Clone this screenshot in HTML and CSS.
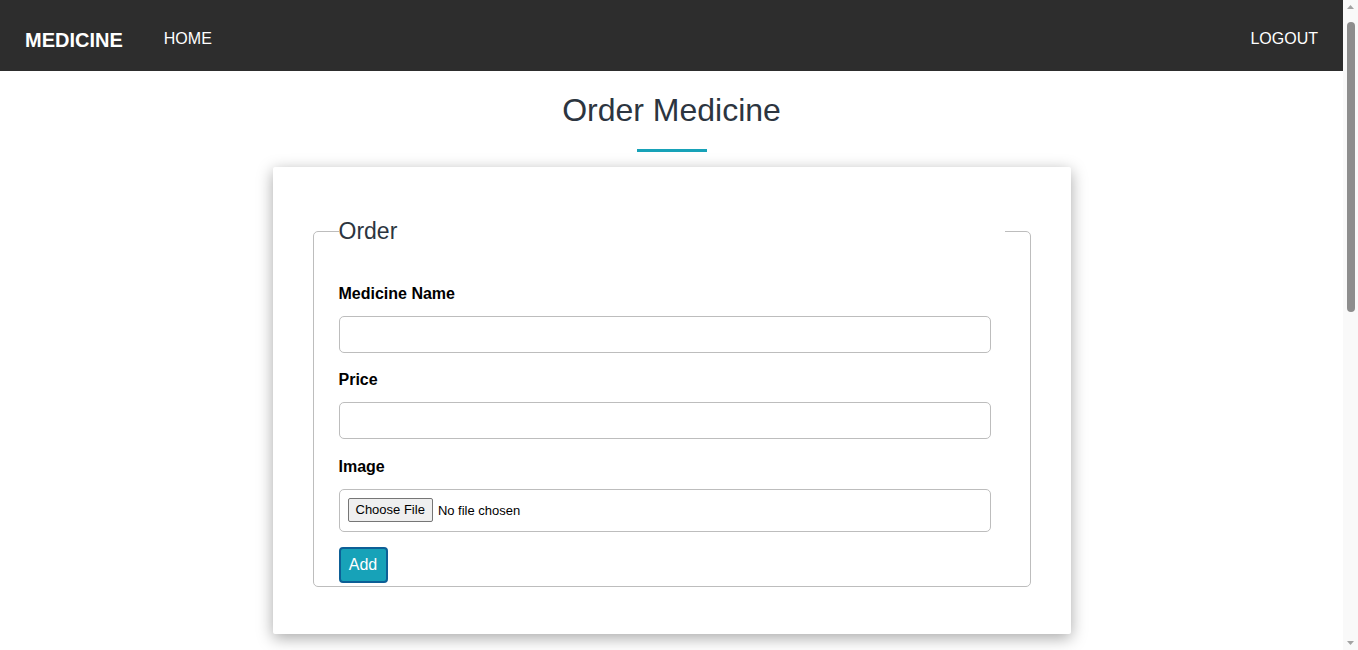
FILE: index.html
```html
<!DOCTYPE html>
<html lang="en">
<head>
<meta charset="utf-8">
<title>Order Medicine</title>
<link rel="stylesheet" href="styles.css">
</head>
<body>
<div class="page">
  <header class="navbar">
    <a class="brand" href="#">MEDICINE</a>
    <nav class="nav-left"><a class="nav-link" href="#">HOME</a></nav>
    <nav class="nav-right"><a class="nav-link" href="#">LOGOUT</a></nav>
  </header>
  <main class="main">
    <h1 class="page-title">Order Medicine</h1>
    <div class="title-bar"></div>
    <section class="card">
      <form>
        <fieldset class="fieldset">
          <legend class="legend">Order</legend>
          <div class="fields">
            <div class="form-group">
              <label class="label" for="name">Medicine Name</label>
              <input class="form-control" id="name" type="text">
            </div>
            <div class="form-group">
              <label class="label" for="price">Price</label>
              <input class="form-control" id="price" type="text">
            </div>
            <div class="form-group">
              <label class="label" for="image">Image</label>
              <div class="file-box"><input class="file-input" id="image" type="file"></div>
            </div>
            <button class="btn-add" type="button">Add</button>
          </div>
        </fieldset>
      </form>
    </section>
  </main>
</div>
<div class="scrollbar" aria-hidden="true">
  <svg class="sb-arrow sb-up" width="15" height="14" viewBox="0 0 15 14"><path d="M4 9 L7.5 5 L11 9 Z" fill="#a3a3a3"/></svg>
  <div class="sb-track"><div class="sb-thumb"></div></div>
  <svg class="sb-arrow sb-down" width="15" height="14" viewBox="0 0 15 14"><path d="M4 5 L7.5 9 L11 5 Z" fill="#a3a3a3"/></svg>
</div>
</body>
</html>
```
FILE: styles.css
```css
* { box-sizing: border-box; }
html, body { margin: 0; padding: 0; }
body {
  font-family: "Liberation Sans", Arial, sans-serif;
  background: #fff;
  color: #000;
}
.page {
  width: calc(100% - 15px);
  min-height: 1394px;
}
.navbar {
  height: 71px;
  background: #2d2d2d;
  display: flex;
  align-items: flex-start;
  padding: 25px 25px 0 25px;
}
.brand {
  color: #fff;
  font-weight: bold;
  font-size: 20px;
  line-height: 30px;
  text-decoration: none;
}
.nav-left { margin-left: 41px; margin-top: 2px; }
.nav-right { margin-left: auto; margin-top: 2px; }
.nav-link {
  color: #fff;
  font-size: 16px;
  line-height: 24px;
  text-decoration: none;
}
.main {
  display: flex;
  flex-direction: column;
  align-items: center;
}
.page-title {
  margin: 20px 0 0;
  font-size: 32px;
  font-weight: normal;
  line-height: 38px;
  color: #2c3540;
}
.title-bar {
  width: 70px;
  height: 3px;
  background: #17a2b8;
  margin-top: 20px;
}
.card {
  width: 798px;
  margin-top: 15px;
  background: #fff;
  padding: 51px 40px 47.5px;
  box-shadow: 0 4px 16px rgba(0, 0, 0, 0.35);
  border-radius: 2px;
}
.fieldset {
  margin: 0;
  border: 1px solid #bdbdbd;
  border-radius: 5px;
  padding: 0 25px 2.5px;
  min-width: 0;
}
.legend {
  width: 100%;
  padding: 0;
  font-size: 23px;
  line-height: 27.6px;
  color: #2c3540;
  margin-bottom: 36px;
}
.fields { padding-right: 14px; }
.form-group { margin-bottom: 15.5px; }
.label {
  display: block;
  font-weight: bold;
  font-size: 16px;
  line-height: 24px;
  margin-bottom: 10px;
}
.form-control {
  display: block;
  width: 100%;
  height: 37px;
  border: 1px solid #bdbdbd;
  border-radius: 5px;
  padding: 6px 12px;
  font: 16px "Liberation Sans", Arial, sans-serif;
  background: #fff;
}
.file-box {
  height: 43px;
  border: 1px solid #bdbdbd;
  border-radius: 5px;
  padding: 8px 8px 9px;
  margin-top: 1px;
}
.file-input {
  display: block;
  font: 13px "Liberation Sans", Arial, sans-serif;
  color: #000;
  height: 24px;
  line-height: 24px;
}
.file-input::file-selector-button {
  font: 13px "Liberation Sans", Arial, sans-serif;
  height: 24px;
  padding: 0 7px;
  margin: 0 5px 0 0;
  border: 1px solid #767676;
  border-radius: 2px;
  background: #efefef;
  color: #000;
}
.btn-add {
  display: block;
  width: 49px;
  height: 36px;
  margin: 0;
  padding: 0;
  background: #17a2b8;
  color: #fff;
  border: 2px solid #0d5f96;
  border-radius: 4px;
  font: 16px "Liberation Sans", Arial, sans-serif;
}
.scrollbar {
  position: fixed;
  top: 0;
  right: 0;
  width: 15px;
  height: 100vh;
  background: #f9f9f9;
  display: flex;
  flex-direction: column;
}
.sb-arrow { display: block; flex: none; }
.sb-track {
  flex: 1;
  padding: 8px 4px 0 4px;
}
.sb-thumb {
  width: 8px;
  height: 290px;
  background: #8d8d8d;
  border-radius: 4px;
}
```
